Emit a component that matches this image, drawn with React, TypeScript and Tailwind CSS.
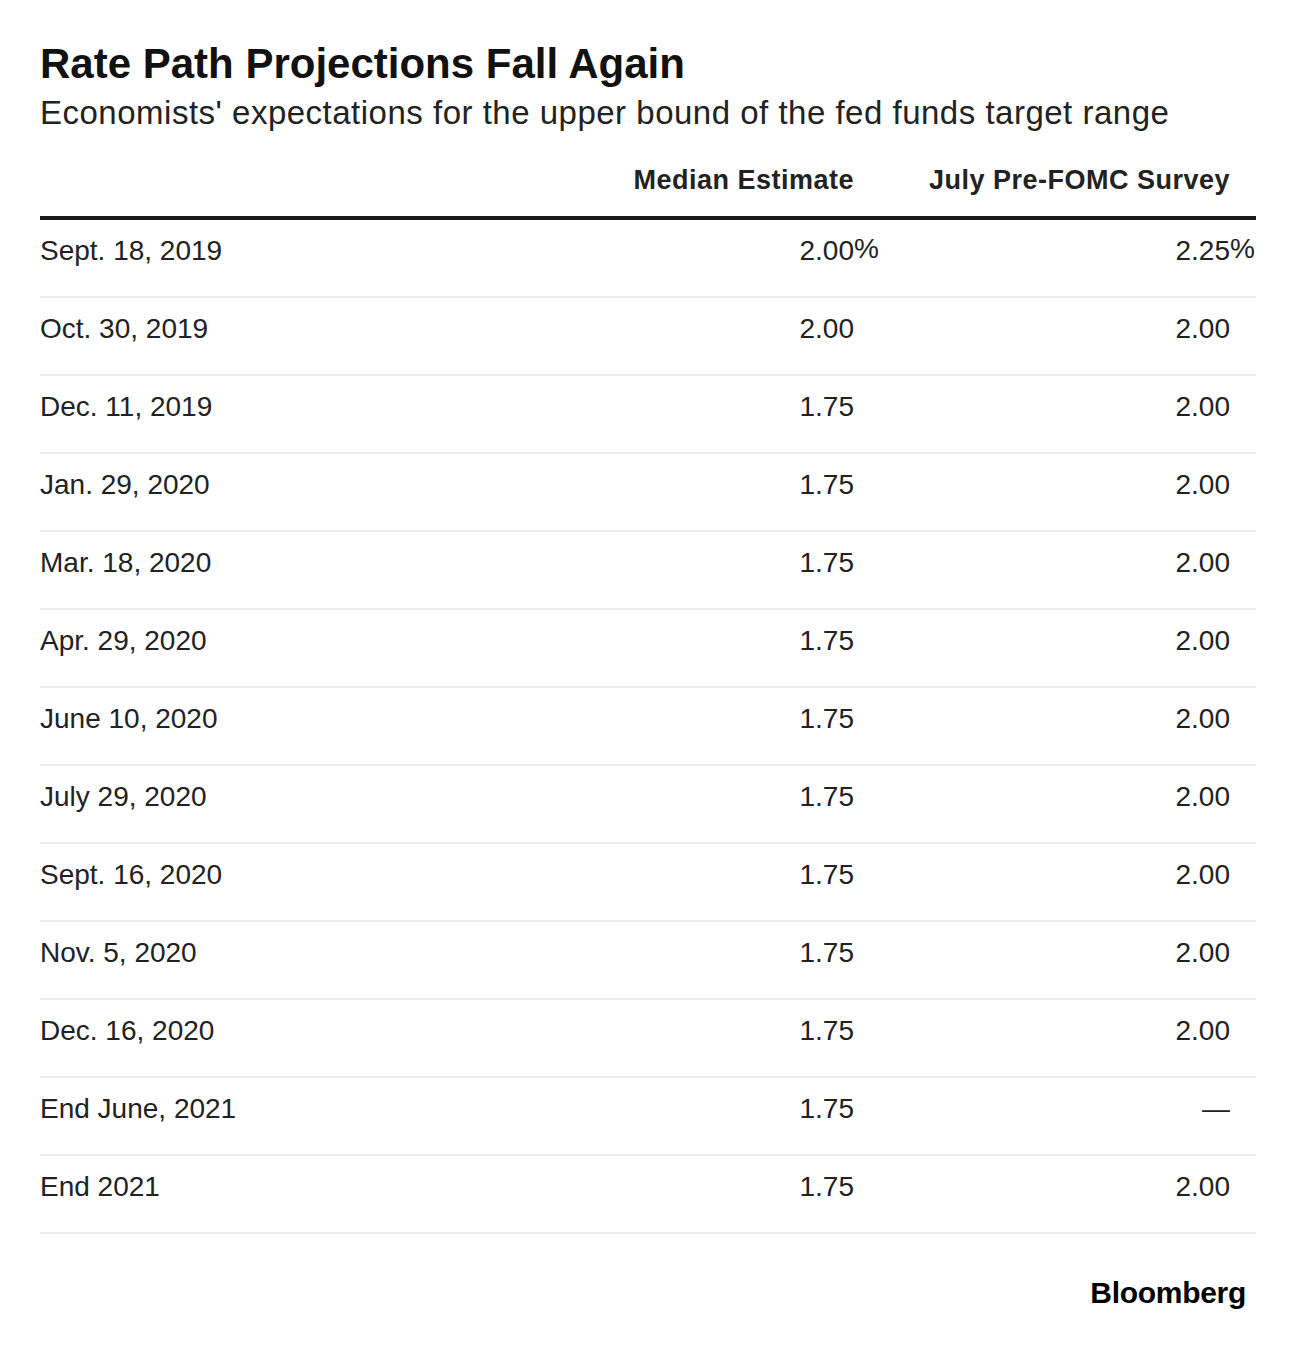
const rows: { date: string; median: string; survey: string }[] = [
  { date: "Sept. 18, 2019", median: "2.00%", survey: "2.25%" },
  { date: "Oct. 30, 2019", median: "2.00", survey: "2.00" },
  { date: "Dec. 11, 2019", median: "1.75", survey: "2.00" },
  { date: "Jan. 29, 2020", median: "1.75", survey: "2.00" },
  { date: "Mar. 18, 2020", median: "1.75", survey: "2.00" },
  { date: "Apr. 29, 2020", median: "1.75", survey: "2.00" },
  { date: "June 10, 2020", median: "1.75", survey: "2.00" },
  { date: "July 29, 2020", median: "1.75", survey: "2.00" },
  { date: "Sept. 16, 2020", median: "1.75", survey: "2.00" },
  { date: "Nov. 5, 2020", median: "1.75", survey: "2.00" },
  { date: "Dec. 16, 2020", median: "1.75", survey: "2.00" },
  { date: "End June, 2021", median: "1.75", survey: "—" },
  { date: "End 2021", median: "1.75", survey: "2.00" },
]

// percent sign hangs past the column edge so digits stay aligned
function Value({ text }: { text: string }) {
  if (text.endsWith("%")) {
    return (
      <span className="relative">
        {text.slice(0, -1)}
        <span className="absolute left-full top-0">%</span>
      </span>
    )
  }
  return <span>{text}</span>
}

export default function App() {
  return (
    <div className="min-h-[1350px] w-[1296px] bg-white font-['Liberation_Sans',Arial,sans-serif] text-[#222]">
      <div className="px-10 pt-[43px]">
        <h1 className="text-[42px] font-bold leading-[42px] text-[#111]">Rate Path Projections Fall Again</h1>
        <p className="mt-[11px] text-[33px] leading-[33px] tracking-[0.5px]">
          Economists' expectations for the upper bound of the fed funds target range
        </p>

        <div className="mt-[38px] grid grid-cols-[1fr_300px_402px] border-b-4 border-[#1a1a1a] pb-[22px] text-[27px] font-bold leading-[27px] tracking-[0.5px]">
          <div />
          <div className="text-right">Median Estimate</div>
          <div className="pr-[26px] text-right">July Pre-FOMC Survey</div>
        </div>

        <div className="flex flex-col">
          {rows.map((row) => (
            <div key={row.date} className="grid h-[78px] grid-cols-[1fr_300px_402px] border-b-2 border-[#ebebeb] pt-[17px] text-[28px] leading-[28px]">
              <div>{row.date}</div>
              <div className="text-right">
                <Value text={row.median} />
              </div>
              <div className="pr-[26px] text-right">
                <Value text={row.survey} />
              </div>
            </div>
          ))}
        </div>

        <div className="mt-[44px] flex justify-end pr-[10px]">
          <span className="text-[30px] font-bold leading-[30px] tracking-[-0.3px] text-black">Bloomberg</span>
        </div>
      </div>
    </div>
  )
}
